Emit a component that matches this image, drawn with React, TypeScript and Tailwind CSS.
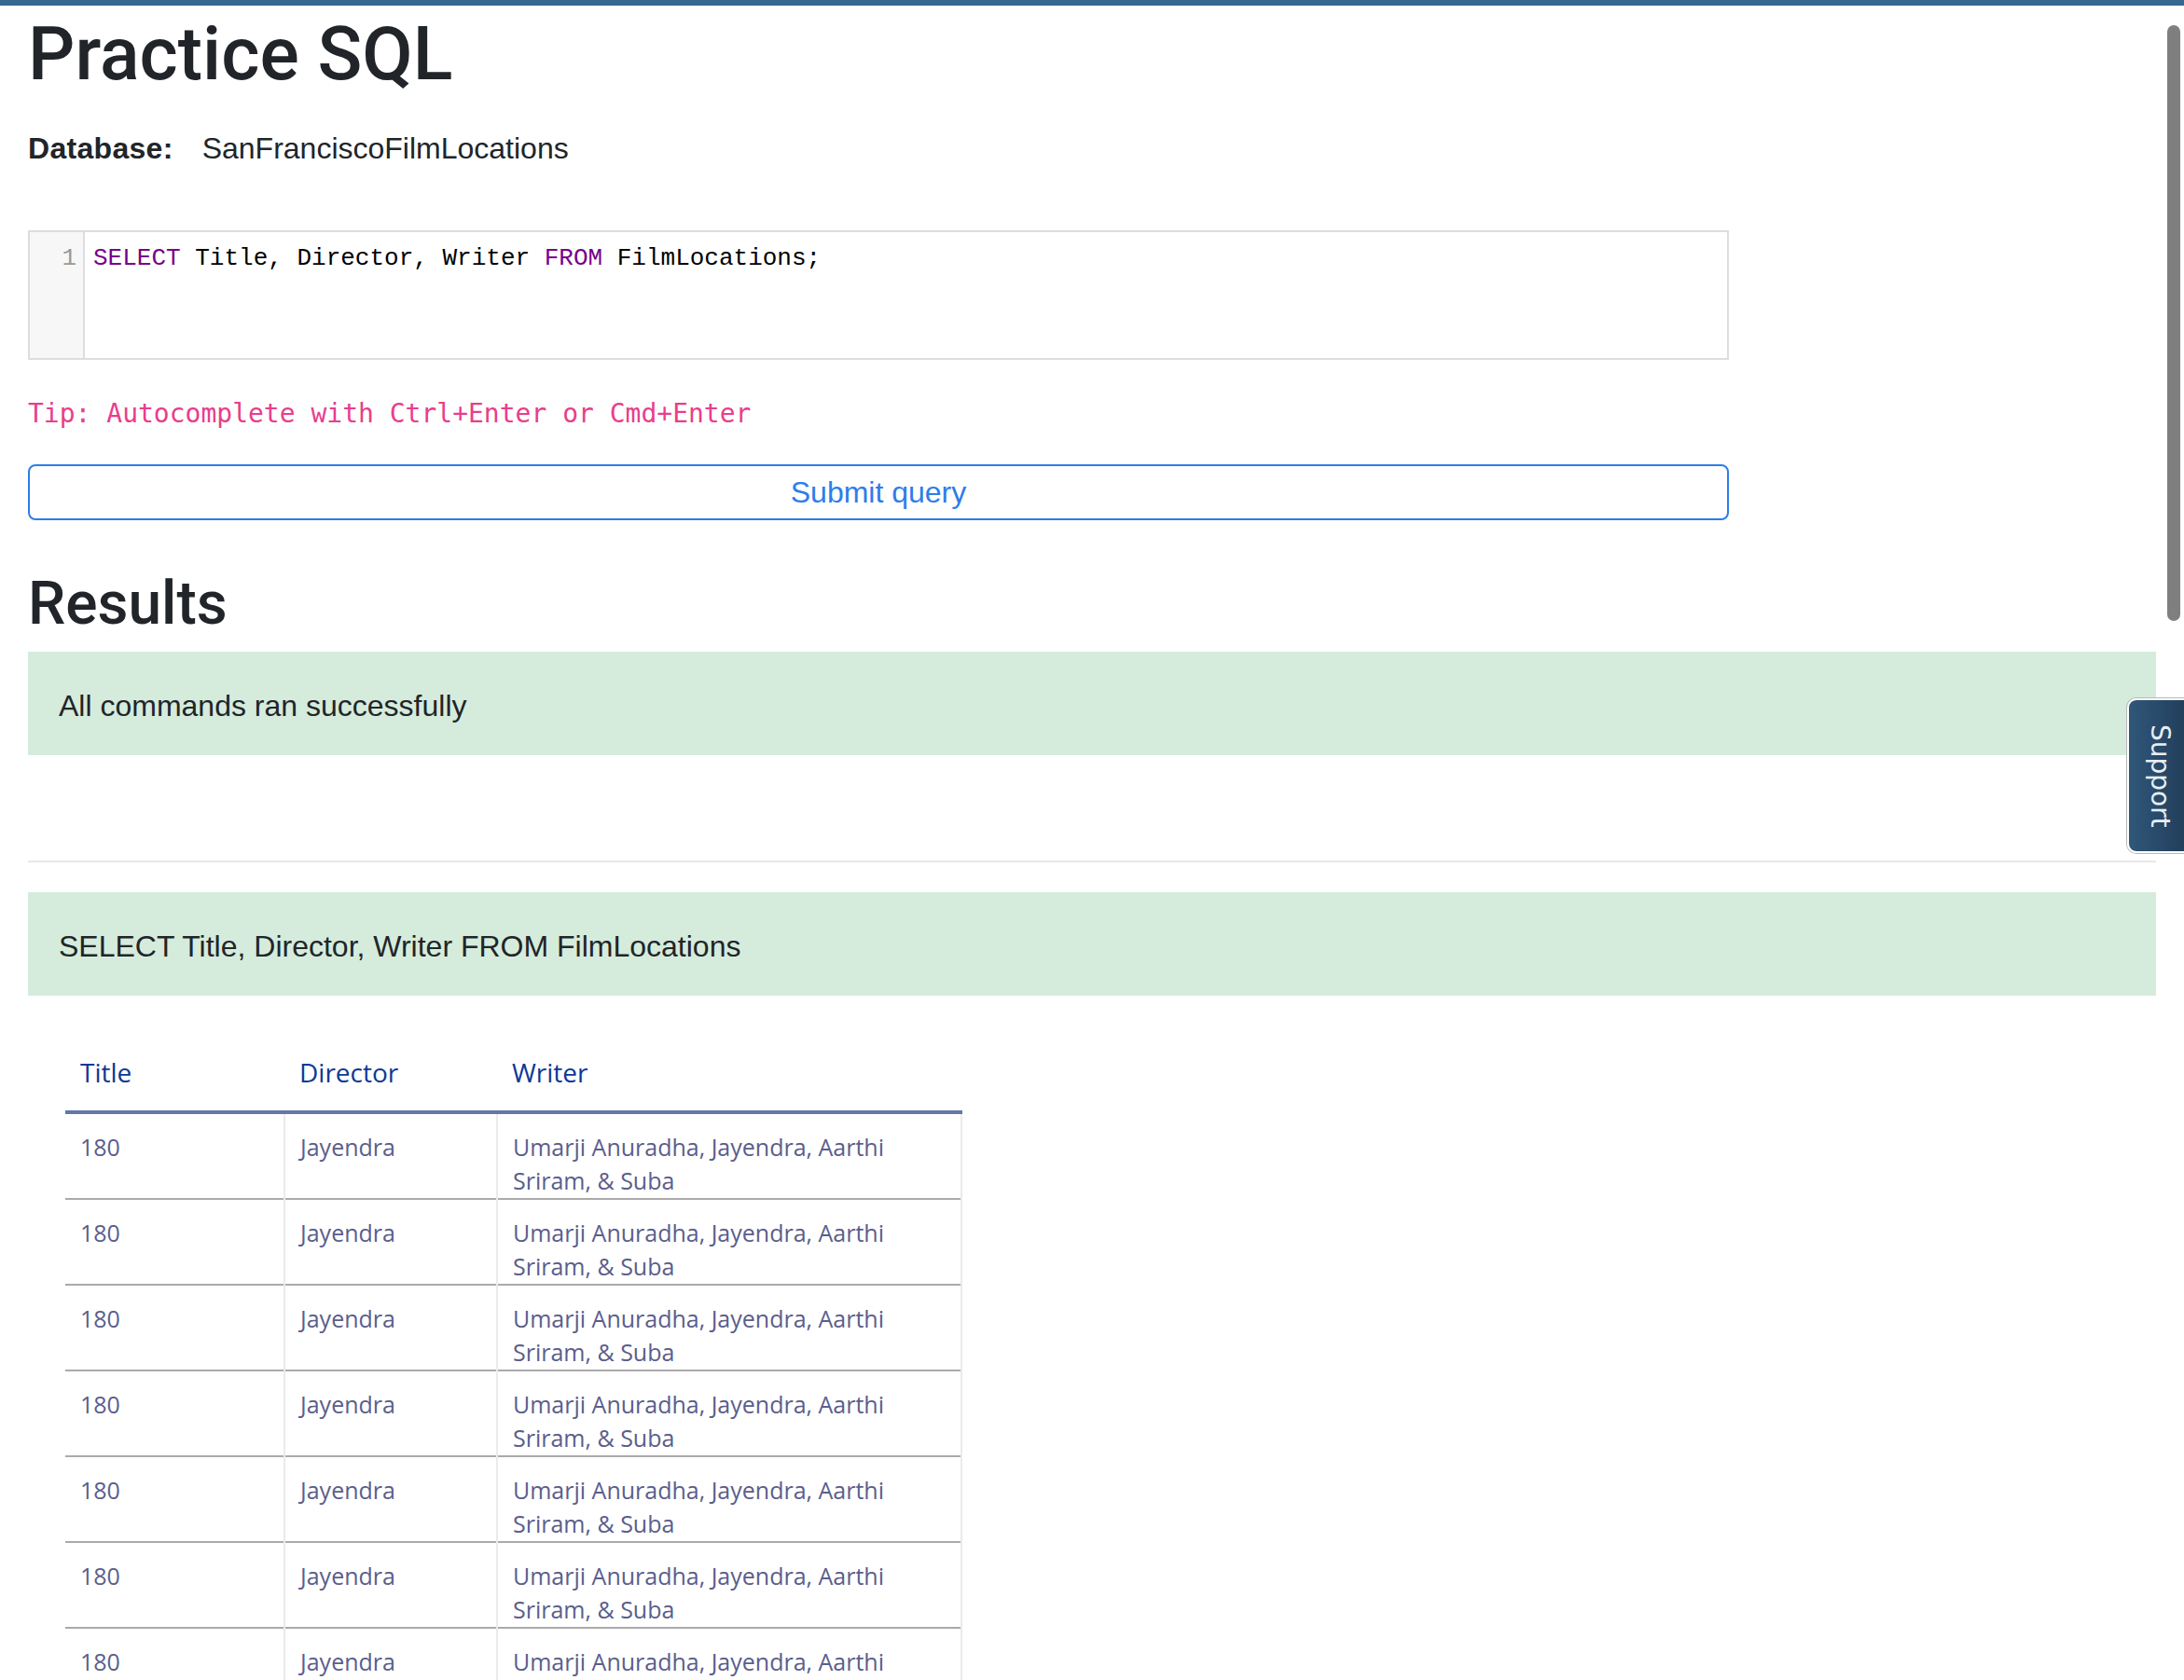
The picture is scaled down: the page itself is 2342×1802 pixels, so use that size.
import React from 'react';

const ROWS = Array.from({ length: 8 }, () => ({
  title: '180',
  director: 'Jayendra',
  writer: 'Umarji Anuradha, Jayendra, Aarthi Sriram, & Suba',
}));

const SuccessAlert: React.FC<{ children: React.ReactNode }> = ({ children }) => (
  <div className="bg-[#d5ecdc] px-[33px] pt-[34px] pb-[29px] text-[32px] leading-[48px] text-[#212529]">
    {children}
  </div>
);

export default function App() {
  return (
    <div className="relative h-[1802px] overflow-hidden bg-white font-['Liberation_Sans',Arial,sans-serif] text-[#212529]">
      {/* top stripe */}
      <div className="h-[6px] bg-[#35678f]" />

      <div className="px-[30px]">
        <h1 className="mt-[4px] font-['Roboto',Arial,sans-serif] text-[79px] font-medium leading-[96px] text-[#212529]">
          Practice SQL
        </h1>

        <div className="mt-[29px] flex text-[32px] leading-[48px]">
          <span className="font-bold tracking-[0.3px]">Database:</span>
          <span className="ml-[31px]">SanFranciscoFilmLocations</span>
        </div>

        {/* code editor */}
        <div className="mt-[64px] flex h-[139px] w-[1824px] border-2 border-[#dddddd] bg-white">
          <div className="w-[59px] border-r-2 border-[#dddddd] bg-[#f7f7f7] pt-[13px] pr-[7px] text-right font-['Liberation_Mono',monospace] text-[26px] leading-[30px] text-[#999999]">
            1
          </div>
          <div className="pl-[9px] pt-[13px] font-['Liberation_Mono',monospace] text-[26px] leading-[30px] text-black">
            <span className="text-[#770088]">SELECT</span> Title, Director, Writer{' '}
            <span className="text-[#770088]">FROM</span> FilmLocations;
          </div>
        </div>

        <div className="mt-[37px] font-['DejaVu_Sans_Mono',monospace] text-[28px] leading-[42px] text-[#e83e8c]">
          Tip: Autocomplete with Ctrl+Enter or Cmd+Enter
        </div>

        <button className="mt-[33px] block h-[60px] w-[1824px] rounded-[8px] border-2 border-[#2d7deb] bg-white text-[32px] leading-[48px] text-[#2d7deb]">
          Submit query
        </button>

        <h2 className="mt-[51px] font-['Roboto',Arial,sans-serif] text-[64px] font-medium leading-[77px] text-[#212529]">
          Results
        </h2>

        <div className="mt-[13px]">
          <SuccessAlert>All commands ran successfully</SuccessAlert>
        </div>

        <hr className="mt-[113px] border-0 border-t-2 border-[#e6e6e6]" />

        <div className="mt-[32px]">
          <SuccessAlert>SELECT Title, Director, Writer FROM FilmLocations</SuccessAlert>
        </div>

        {/* results table */}
        <div className="ml-[40px] mt-[41px]">
          <table className="w-[961px] table-fixed border-collapse font-['Open_Sans',sans-serif]">
            <colgroup>
              <col className="w-[235px]" />
              <col className="w-[228px]" />
              <col className="w-[498px]" />
            </colgroup>
            <thead>
              <tr className="border-b-4 border-[#6476aa]">
                <th className="px-[16px] pt-[20px] pb-[20px] text-left text-[28px] font-normal leading-[42px] text-[#0d3896]">Title</th>
                <th className="px-[16px] pt-[20px] pb-[20px] text-left text-[28px] font-normal leading-[42px] text-[#0d3896]">Director</th>
                <th className="px-[16px] pt-[20px] pb-[20px] text-left text-[28px] font-normal leading-[42px] text-[#0d3896]">Writer</th>
              </tr>
            </thead>
            <tbody>
              {ROWS.map((r, i) => (
                <tr key={i} className="border-b-2 border-[#aaaaaa] align-top text-[25px] leading-[36px] text-[#5a5e8c]">
                  <td className="px-[16px] pt-[17px] pb-[1px]">{r.title}</td>
                  <td className="border-l-2 border-[#ebebeb] px-[16px] pt-[17px] pb-[1px]">{r.director}</td>
                  <td className="border-x-2 border-[#ebebeb] px-[16px] pt-[17px] pb-[1px]">{r.writer}</td>
                </tr>
              ))}
            </tbody>
          </table>
        </div>
      </div>

      {/* support tab */}
      <div className="absolute right-0 top-[749px] flex h-[166px] w-[61px] items-center justify-center rounded-l-[10px] border-2 border-r-0 border-white bg-gradient-to-r from-[#30577a] to-[#223f5c] shadow-[0_0_0_1px_#b8b8b8]">
        <span className="ml-[6px] font-['DejaVu_Sans',sans-serif] text-[28px] leading-none text-[#e8eef3] [writing-mode:vertical-rl]">
          Support
        </span>
      </div>

      {/* scrollbar thumb */}
      <div className="absolute right-[4px] top-[27px] h-[639px] w-[14px] rounded-full bg-[#7f7f7f]" />
    </div>
  );
}
